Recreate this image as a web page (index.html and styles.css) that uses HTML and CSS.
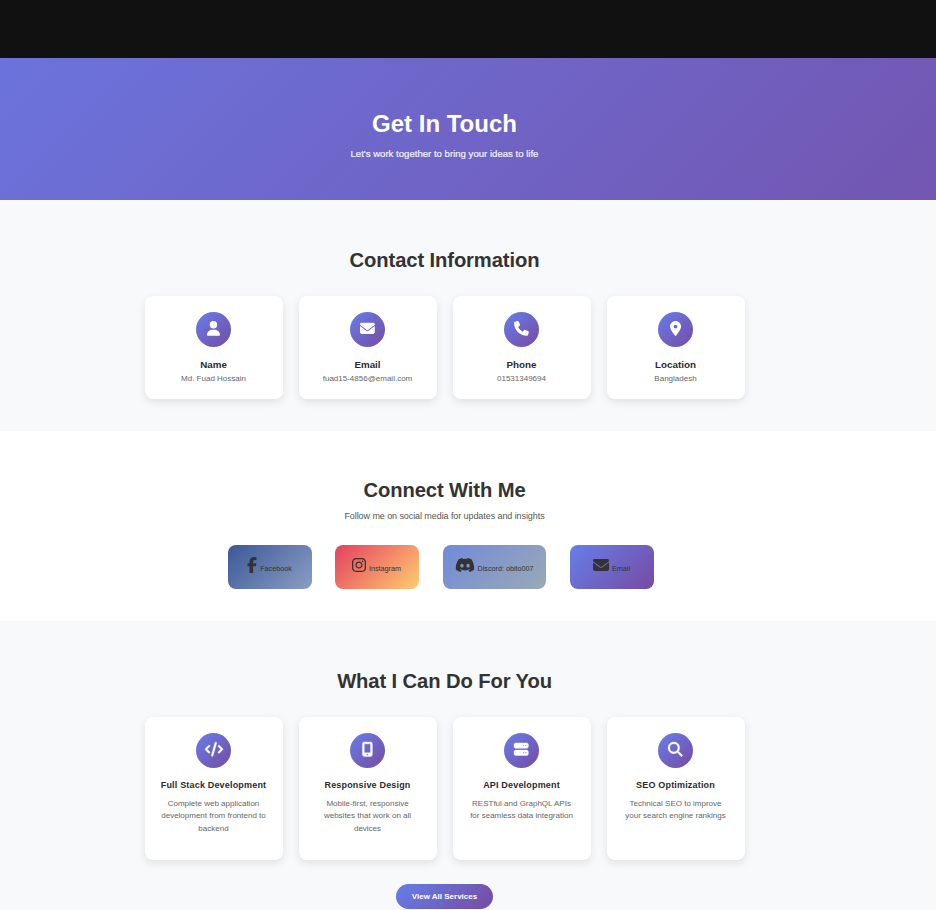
FILE: index.html
```html
<!DOCTYPE html>
<html lang="en">
<head>
<meta charset="utf-8">
<title>Contact</title>
<link rel="stylesheet" href="styles.css">
</head>
<body>
<header class="topbar"></header>
<section class="hero">
  <div class="inner">
    <h1>Get In Touch</h1>
    <p class="hero-sub">Let's work together to bring your ideas to life</p>
  </div>
</section>

<section class="contact tint">
  <div class="inner">
    <h2>Contact Information</h2>
    <div class="grid">
      <article class="card info">
        <div class="disc"><svg class="i14" viewBox="0 0 448 512"><path d="M224 256A128 128 0 1 0 224 0a128 128 0 1 0 0 256zm-45.700 48C79.800 304 0 383.800 0 482.300C0 498.700 13.300 512 29.700 512H418.300c16.400 0 29.700-13.300 29.700-29.700C448 383.800 368.200 304 269.700 304H178.300z"/></svg></div>
        <h3>Name</h3><p>Md. Fuad Hossain</p>
      </article>
      <article class="card info">
        <div class="disc"><svg class="i14 envelope" viewBox="0 0 512 512"><path d="M48 64C21.500 64 0 85.500 0 112c0 15.100 7.100 29.300 19.200 38.400L236.800 313.600c11.400 8.500 27 8.500 38.400 0L492.800 150.400c12.100-9.100 19.200-23.300 19.200-38.400c0-26.500-21.500-48-48-48H48zM0 176V384c0 35.300 28.700 64 64 64H448c35.300 0 64-28.700 64-64V176L294.400 339.200c-22.800 17.100-54 17.100-76.800 0L0 176z"/></svg></div>
        <h3>Email</h3><p>fuad15-4856@email.com</p>
      </article>
      <article class="card info">
        <div class="disc"><svg class="i14" viewBox="0 0 512 512"><path d="M164.900 24.600c-7.700-18.600-28-28.500-47.400-23.200l-88 24C12.100 30.200 0 46 0 64C0 311.400 200.600 512 448 512c18 0 33.800-12.100 38.600-29.500l24-88c5.300-19.400-4.600-39.700-23.200-47.400l-96-40c-16.300-6.800-35.200-2.100-46.300 11.600L304.700 368C234.300 334.700 177.300 277.700 144 207.300L193.300 167c13.700-11.200 18.400-30 11.600-46.300l-40-96z"/></svg></div>
        <h3>Phone</h3><p>01531349694</p>
      </article>
      <article class="card info">
        <div class="disc"><svg class="i14" viewBox="0 0 384 512"><path d="M215.700 499.200C267 435 384 279.400 384 192C384 86 298 0 192 0S0 86 0 192c0 87.400 117 243 168.300 307.200c12.300 15.300 35.100 15.300 47.400 0zM192 128a64 64 0 1 1 0 128 64 64 0 1 1 0-128z"/></svg></div>
        <h3>Location</h3><p>Bangladesh</p>
      </article>
    </div>
  </div>
</section>

<section class="social">
  <div class="inner">
    <h2>Connect With Me</h2>
    <p class="lead">Follow me on social media for updates and insights</p>
    <div class="links">
      <a class="link facebook"><svg class="i16" viewBox="0 0 320 512"><path d="M80 299.300V512H196V299.300h86.500l18-97.800H196V166.900c0-51.700 20.300-71.500 72.700-71.500c16.300 0 29.400 .4 37 1.200V7.900C291.400 4 256.400 0 236.200 0C129.300 0 80 50.500 80 159.400v42.100H14v97.800H80z"/></svg><span>Facebook</span></a>
      <a class="link instagram"><svg class="i16" viewBox="0 0 448 512"><path d="M224.100 141c-63.600 0-114.900 51.300-114.900 114.900s51.300 114.900 114.900 114.900S339 319.500 339 255.900 287.700 141 224.100 141zm0 189.600c-41.100 0-74.700-33.500-74.700-74.700s33.500-74.700 74.700-74.700 74.700 33.500 74.700 74.700-33.600 74.700-74.700 74.700zm146.400-194.300c0 14.900-12 26.800-26.800 26.800-14.900 0-26.800-12-26.800-26.800s12-26.800 26.800-26.800 26.800 12 26.800 26.800zm76.100 27.200c-1.700-35.900-9.900-67.700-36.200-93.900-26.200-26.200-58-34.400-93.900-36.200-37-2.100-147.900-2.100-184.900 0-35.800 1.700-67.600 9.900-93.900 36.100s-34.400 58-36.200 93.900c-2.100 37-2.100 147.900 0 184.900 1.700 35.900 9.900 67.700 36.200 93.900s58 34.400 93.900 36.200c37 2.100 147.900 2.100 184.900 0 35.900-1.700 67.700-9.900 93.900-36.200 26.200-26.200 34.400-58 36.200-93.900 2.100-37 2.100-147.800 0-184.800zM398.800 388c-7.800 19.600-22.900 34.700-42.600 42.600-29.500 11.700-99.500 9-132.100 9s-102.700 2.600-132.100-9c-19.600-7.800-34.700-22.900-42.600-42.600-11.700-29.500-9-99.500-9-132.100s-2.600-102.700 9-132.100c7.800-19.600 22.900-34.700 42.600-42.600 29.500-11.700 99.500-9 132.100-9s102.700-2.600 132.100 9c19.600 7.800 34.700 22.900 42.600 42.600 11.700 29.500 9 99.500 9 132.100s2.700 102.700-9 132.100z"/></svg><span>Instagram</span></a>
      <a class="link discord"><svg class="i16" viewBox="0 0 640 512"><path d="M524.500 69.800a1.500 1.500 0 0 0-.8-.7A485.100 485.100 0 0 0 404.100 32a1.800 1.800 0 0 0-1.900 .9 337.500 337.500 0 0 0-14.900 30.600 447.800 447.800 0 0 0-134.400 0 309.500 309.500 0 0 0-15.100-30.600 1.900 1.900 0 0 0-1.900-.9A483.700 483.700 0 0 0 116.100 69.100a1.700 1.700 0 0 0-.8 .7C39.100 183.700 18.200 294.700 28.400 404.400a2 2 0 0 0 .8 1.400A487.700 487.700 0 0 0 176 479.900a1.900 1.900 0 0 0 2.100-.7A348.200 348.200 0 0 0 208.100 430.400a1.900 1.900 0 0 0-1-2.600 321.200 321.200 0 0 1-45.900-21.900 1.900 1.900 0 0 1-.2-3.100c3.100-2.300 6.200-4.700 9.100-7.100a1.800 1.800 0 0 1 1.900-.3c96.200 43.900 200.400 43.900 295.500 0a1.800 1.800 0 0 1 1.900 .2c2.900 2.400 6 4.900 9.100 7.200a1.900 1.900 0 0 1-.2 3.100 301.400 301.400 0 0 1-45.900 21.800 1.900 1.900 0 0 0-1 2.600 391.100 391.100 0 0 0 30 48.800 1.900 1.900 0 0 0 2.100 .7A486 486 0 0 0 610.700 405.700a1.900 1.900 0 0 0 .8-1.400C623.700 277.600 590.900 167.500 524.500 69.800zM222.500 337.600c-29 0-52.800-26.600-52.800-59.200S193.100 219.100 222.500 219.100c29.700 0 53.300 26.800 52.800 59.200C275.300 311 251.900 337.600 222.500 337.600zm195.400 0c-29 0-52.800-26.600-52.800-59.200S388.400 219.100 417.900 219.100c29.700 0 53.300 26.800 52.800 59.200C470.700 311 447.500 337.600 417.900 337.600z"/></svg><span>Discord: obito007</span></a>
      <a class="link mail"><svg class="i16" viewBox="0 0 512 512"><path d="M48 64C21.500 64 0 85.500 0 112c0 15.100 7.100 29.300 19.200 38.400L236.800 313.600c11.400 8.500 27 8.500 38.400 0L492.800 150.400c12.100-9.100 19.200-23.300 19.200-38.400c0-26.500-21.500-48-48-48H48zM0 176V384c0 35.300 28.700 64 64 64H448c35.300 0 64-28.700 64-64V176L294.400 339.200c-22.800 17.100-54 17.100-76.800 0L0 176z"/></svg><span>Email</span></a>
    </div>
  </div>
</section>

<section class="services tint">
  <div class="inner">
    <h2>What I Can Do For You</h2>
    <div class="grid">
      <article class="card service">
        <div class="disc"><svg class="i14 bold" viewBox="0 0 640 512"><path d="M392.800 1.200c-17-4.900-34.700 5-39.600 22l-128 448c-4.900 17 5 34.700 22 39.600s34.700-5 39.600-22l128-448c4.900-17-5-34.700-22-39.600zm80.600 120.100c-12.500 12.500-12.500 32.800 0 45.300L562.700 256l-89.400 89.400c-12.500 12.500-12.500 32.800 0 45.300s32.800 12.500 45.300 0l112-112c12.500-12.500 12.500-32.800 0-45.300l-112-112c-12.500-12.500-32.800-12.500-45.300 0zm-306.700 0c-12.500-12.500-32.800-12.500-45.300 0l-112 112c-12.500 12.500-12.500 32.800 0 45.300l112 112c12.500 12.500 32.800 12.500 45.300 0s12.500-32.800 0-45.300L77.300 256l89.400-89.400c12.500-12.500 12.500-32.800 0-45.300z"/></svg></div>
        <h3>Full Stack Development</h3><p>Complete web application<br>development from frontend to<br>backend</p>
      </article>
      <article class="card service">
        <div class="disc"><svg class="i14 bold" viewBox="0 0 384 512"><path d="M16 64C16 28.700 44.700 0 80 0H304c35.300 0 64 28.700 64 64V448c0 35.300-28.700 64-64 64H80c-35.300 0-64-28.700-64-64V64zM224 448a32 32 0 1 0-64 0 32 32 0 1 0 64 0zM304 64H80V384H304V64z"/></svg></div>
        <h3>Responsive Design</h3><p>Mobile-first, responsive<br>websites that work on all<br>devices</p>
      </article>
      <article class="card service">
        <div class="disc"><svg class="i14 bold" viewBox="0 0 512 512"><path d="M64 32C28.700 32 0 60.700 0 96v64c0 35.300 28.700 64 64 64H448c35.300 0 64-28.700 64-64V96c0-35.300-28.700-64-64-64H64zm280 72a24 24 0 1 1 0 48 24 24 0 1 1 0-48zm48 24a24 24 0 1 1 48 0 24 24 0 1 1-48 0zM64 288c-35.300 0-64 28.700-64 64v64c0 35.300 28.700 64 64 64H448c35.300 0 64-28.700 64-64V352c0-35.300-28.700-64-64-64H64zm280 72a24 24 0 1 1 0 48 24 24 0 1 1 0-48zm56 24a24 24 0 1 1 48 0 24 24 0 1 1-48 0z"/></svg></div>
        <h3>API Development</h3><p>RESTful and GraphQL APIs<br>for seamless data integration</p>
      </article>
      <article class="card service">
        <div class="disc"><svg class="i14 bold" viewBox="0 0 512 512"><path d="M416 208c0 45.900-14.900 88.300-40 122.700L502.600 457.400c12.500 12.500 12.500 32.800 0 45.300s-32.800 12.500-45.300 0L330.700 376c-34.400 25.200-76.800 40-122.700 40C93.100 416 0 322.900 0 208S93.100 0 208 0S416 93.100 416 208zM208 352a144 144 0 1 0 0-288 144 144 0 1 0 0 288z"/></svg></div>
        <h3>SEO Optimization</h3><p>Technical SEO to improve<br>your search engine rankings</p>
      </article>
    </div>
    <a class="button">View All Services</a>
  </div>
</section>
</body>
</html>
```
FILE: styles.css
```css
* { box-sizing: border-box; margin: 0; padding: 0; }
html, body { height: 910px; overflow: hidden; }
body {
  font-family: "Liberation Sans", Arial, sans-serif;
  color: #333;
  background: #f8f9fb;
}
svg { display: block; fill: currentColor; overflow: visible; }
.topbar { height: 58px; background: #111; }
.inner { width: 889px; text-align: center; }
.hero {
  height: 142px;
  padding-top: 50px;
  background: linear-gradient(135deg, #6b73dc, #7356b1);
  color: #fff;
}
h1 { font-size: 24px; line-height: 32px; }
.hero-sub { margin-top: 7px; font-size: 9.6px; line-height: 14px; opacity: .92; -webkit-text-stroke: .2px; }
.tint { background: #f8f9fb; }
h2 { font-size: 20.2px; line-height: 28px; letter-spacing: -.1px; }
.contact { height: 231px; padding-top: 46px; }
.grid {
  display: grid;
  grid-template-columns: repeat(4, 138px);
  gap: 16px;
  width: 600px;
  margin: 22px 0 0 145px;
}
.card {
  display: flex;
  flex-direction: column;
  align-items: center;
  padding: 16px 1px 0 0;
  border-radius: 8px;
  background: #fff;
  box-shadow: 0 3px 8px rgba(0, 0, 0, .1);
}
.info { height: 103px; }
.service { height: 143px; }
.disc {
  display: flex;
  justify-content: center;
  width: 35px;
  height: 35px;
  padding-top: 9px;
  border-radius: 50%;
  background: linear-gradient(135deg, #667eea, #764ba2);
  color: #fff;
}
.i14 { height: 14.8px; }
.bold { height: 14.4px; stroke: currentColor; stroke-width: 14; }
.i16 { height: 16px; }
.card h3 { white-space: nowrap; color: #2b2b2f; }
.info h3 { margin-top: 11px; font-size: 9.8px; line-height: 14px; }
.info p { margin-top: 1px; font-size: 8px; line-height: 12px; color: #666; }
.service h3 { margin-top: 10px; font-size: 9px; line-height: 14px; letter-spacing: .18px; }
.service p { margin-top: 6px; font-size: 8px; line-height: 12.4px; color: #666; white-space: nowrap; }

.social { height: 190px; padding-top: 45px; background: #fff; }
.lead { margin-top: 5px; font-size: 9px; line-height: 14px; letter-spacing: -.08px; color: #555; }
.links { display: flex; gap: 24px; margin: 22px 0 0 228px; }
.link {
  display: flex;
  justify-content: center;
  gap: 3px;
  width: 84px;
  height: 44px;
  padding: 12px 1px 0 0;
  border-radius: 8px;
  font-size: 7.2px;
}
.link span { margin-top: 7px; line-height: 10px; white-space: nowrap; }
.facebook { background: linear-gradient(135deg, #3b5998, #8b9dc3); }
.instagram { margin-left: -1px; background: linear-gradient(135deg, #e4405f, #ffcc70); }
.discord { width: 103px; background: linear-gradient(135deg, #7289da, #99aab5); }
.mail { background: linear-gradient(135deg, #667eea, #764ba2); }

.services { height: 289px; padding-top: 46px; }
.button {
  display: block;
  width: 97px;
  height: 25px;
  margin: 24px 0 0 396px;
  border-radius: 13px;
  background: linear-gradient(135deg, #667eea, #764ba2);
  color: #fff;
  font-size: 8px;
  font-weight: bold;
  line-height: 25px;
}
```
